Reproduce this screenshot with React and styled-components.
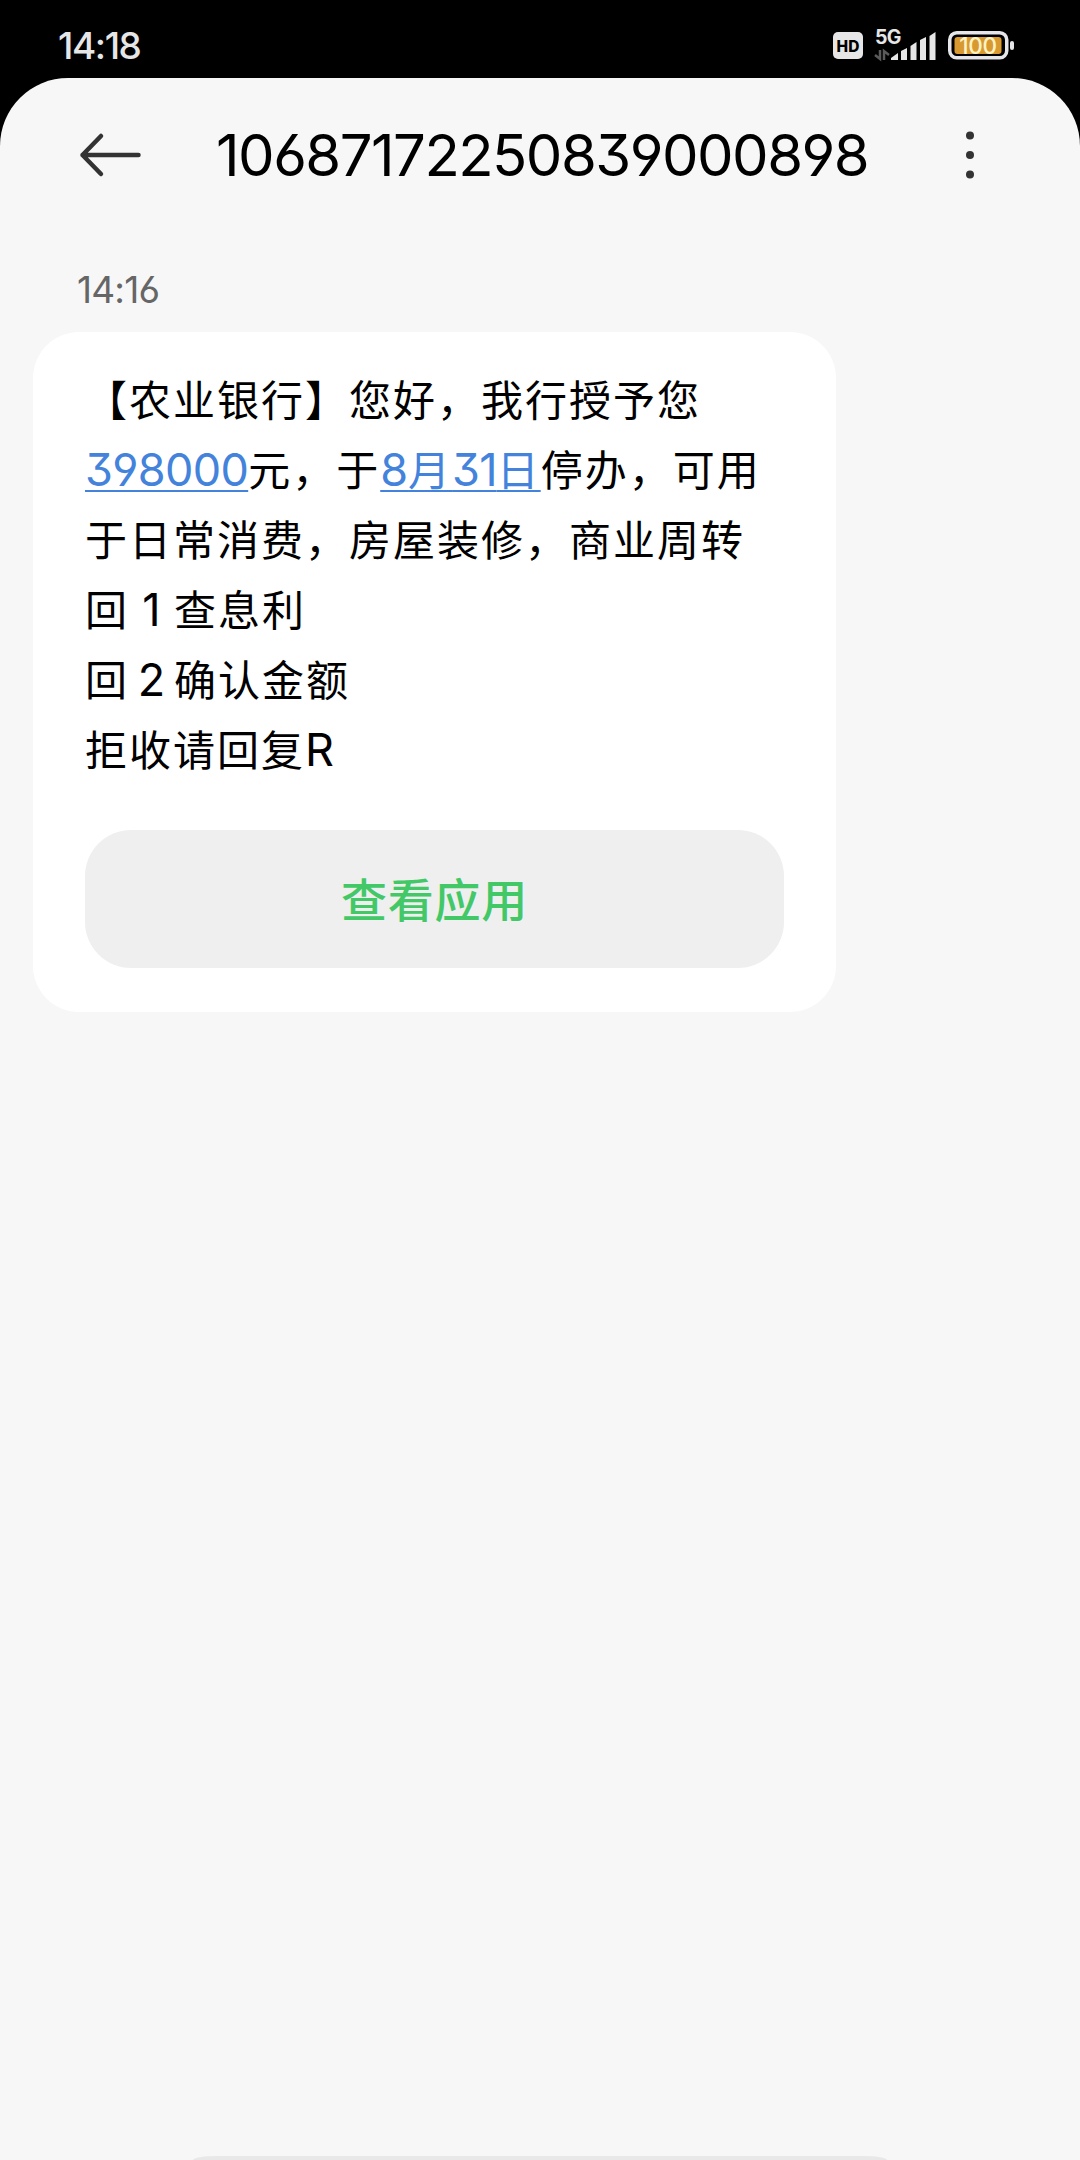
import React from 'react';
import { styled, createGlobalStyle } from 'styled-components';

const GlobalStyle = createGlobalStyle`
    * {
        box-sizing: border-box;
    }

    body {
        margin: 0;
        background: #000;
        font-family: Inter, 'Noto Sans CJK SC', sans-serif;
        font-feature-settings: 'cv03', 'cv04', 'cv09';
    }
`;

const Phone = styled.div`
    width: 1080px;
    height: 2160px;
    display: flex;
    flex-direction: column;
    background: #000;
    overflow: hidden;
`;

const StatusBar = styled.div`
    height: 78px;
    flex: none;
    display: flex;
    justify-content: space-between;
    padding: 0 64px 0 58px;
`;

const Clock = styled.span`
    padding-top: 14px;
    font-size: 37px;
    line-height: 64px;
    font-weight: 500;
    letter-spacing: -1.4px;
    color: #e6e6e6;
`;

const StatusIcons = styled.div`
    display: flex;
    padding-top: 28px;

    svg {
        display: block;
        overflow: visible;
    }
`;

const Screen = styled.div`
    flex: 1;
    display: flex;
    flex-direction: column;
    background: #f7f7f7;
    border-radius: 68px 68px 0 0;
`;

const Header = styled.div`
    height: 154px;
    flex: none;
    display: flex;
    align-items: center;
    padding: 0 104px 0 78px;
`;

const IconButton = styled.button`
    display: flex;
    padding: 0;
    border: none;
    background: none;
`;

const Title = styled.h1`
    flex: 1;
    margin: 0;
    padding-left: 72px;
    font-size: 58px;
    line-height: 70px;
    font-weight: 400;
    letter-spacing: -1.52px;
    white-space: nowrap;
    color: #000;
`;

const Thread = styled.div`
    flex: 1;
    display: flex;
    flex-direction: column;
    align-items: flex-start;
    padding: 32px 33px 0;
`;

const Time = styled.span`
    height: 68px;
    padding-left: 44px;
    font-size: 37px;
    line-height: 51px;
    letter-spacing: -0.8px;
    color: #666;
`;

const Bubble = styled.div`
    width: 803px;
    height: 680px;
    padding: 31px 52px 44px;
    border-radius: 46px;
    background: #fff;
`;

const Line = styled.p`
    height: 70px;
    margin: 0;
    font-family: 'Noto Sans CJK SC', sans-serif;
    font-size: 42px;
    line-height: 70px;
    letter-spacing: 2px;
    text-spacing-trim: space-all;
    white-space: pre;
    color: #000;
`;

const Latin = styled.span`
    font-family: Inter, sans-serif;
    font-size: 45px;
    line-height: 1;
    letter-spacing: ${(props) => props.$spacing || 0}px;
`;

const Digit = styled(Latin)`
    display: inline-block;
    width: 45px;
    text-align: center;
`;

const Link = styled.span`
    color: #4383dc;
    text-decoration: underline;
    text-decoration-thickness: 2px;
    text-decoration-skip-ink: none;
    text-underline-offset: 4px;
`;

const ActionButton = styled.button`
    display: block;
    width: 699px;
    height: 138px;
    margin-top: 47px;
    padding: 0 0 4px;
    border: none;
    border-radius: 46px;
    background: #efefef;
    font-family: 'Noto Sans CJK SC', sans-serif;
    font-size: 46px;
    font-weight: 500;
    letter-spacing: 0.7px;
    color: #43c868;
`;

const InputBar = styled.div`
    width: 694px;
    height: 4px;
    flex: none;
    align-self: center;
    border-radius: 24px 24px 0 0 / 4px 4px 0 0;
    background: #e8e8e8;
`;

function HdIcon() {
    return (
        <svg width="43" height="34" viewBox="0 0 43 34">
            <rect x="0" y="4" width="30" height="27" rx="5" fill="#e6e6e6" />
            <text x="15" y="23.500" textAnchor="middle" fontSize="15.500" fontWeight="800" fill="#000">HD</text>
        </svg>
    );
}

function SignalIcon() {
    return (
        <svg width="72" height="34" viewBox="0 0 72 34">
            <text x="-1" y="16" fontSize="19.500" fontWeight="700" letterSpacing="-0.6" fill="#e6e6e6">5G</text>
            <g fill="none" stroke="#5a5a5a" strokeWidth="2.500">
                <path d="M4 22v9l-5-4" />
                <path d="M8 32v-9l5 4" />
            </g>
            <g fill="#e6e6e6">
                <path d="M15 32v-2l7-5v7z" />
                <path d="M25 32v-9l6-3v12z" />
                <path d="M34.500 32v-14l6-4v18z" />
                <path d="M44 32v-20l6-3v23z" />
                <path d="M53.500 32v-24l6-4v28z" />
            </g>
        </svg>
    );
}

function BatteryIcon() {
    return (
        <svg width="68" height="34" viewBox="0 0 68 34">
            <rect x="1.750" y="4.750" width="57" height="25" rx="7" fill="none" stroke="#e6e6ea" strokeWidth="3.500" />
            <rect x="6.500" y="9" width="47" height="17" rx="3" fill="#d89a30" />
            <rect x="62" y="13" width="4" height="9" rx="2" fill="#e6e6ea" />
            <text x="30" y="25.500" textAnchor="middle" fontSize="22.500" fontWeight="500" letterSpacing="-0.3" fill="#fff3c4">100</text>
        </svg>
    );
}

function BackIcon() {
    return (
        <svg width="66" height="48" viewBox="0 0 66 48" fill="none" stroke="#333" strokeWidth="4.500" strokeLinecap="round" strokeLinejoin="round">
            <path d="M23 5L4.500 24L23 43M4.500 24H60.500" />
        </svg>
    );
}

function MoreIcon() {
    return (
        <svg width="12" height="48" viewBox="0 0 12 48" fill="#333">
            <circle cx="6" cy="4.500" r="4" />
            <circle cx="6" cy="24" r="4" />
            <circle cx="6" cy="43.500" r="4" />
        </svg>
    );
}

function App() {
    return (
        <>
            <GlobalStyle />
            <Phone>
                <StatusBar>
                    <Clock>14:18</Clock>
                    <StatusIcons>
                        <HdIcon />
                        <SignalIcon />
                        <BatteryIcon />
                    </StatusIcons>
                </StatusBar>
                <Screen>
                    <Header>
                        <IconButton type="button"><BackIcon /></IconButton>
                        <Title>10687172250839000898</Title>
                        <IconButton type="button"><MoreIcon /></IconButton>
                    </Header>
                    <Thread>
                        <Time>14:16</Time>
                        <Bubble>
                            <Line>【农业银行】您好，我行授予您</Line>
                            <Line>
                                <Link><Latin $spacing={-0.65}>398000</Latin></Link>
                                元，于
                                <Link><Latin>8</Latin>月<Latin $spacing={-0.8}>31</Latin>日</Link>
                                停办，可用
                            </Line>
                            <Line>于日常消费，房屋装修，商业周转</Line>
                            <Line>回<Digit>1</Digit>查息利</Line>
                            <Line>回<Digit>2</Digit>确认金额</Line>
                            <Line>拒收请回复<Latin>R</Latin></Line>
                            <ActionButton type="button">查看应用</ActionButton>
                        </Bubble>
                    </Thread>
                    <InputBar />
                </Screen>
            </Phone>
        </>
    );
}

export default App;
